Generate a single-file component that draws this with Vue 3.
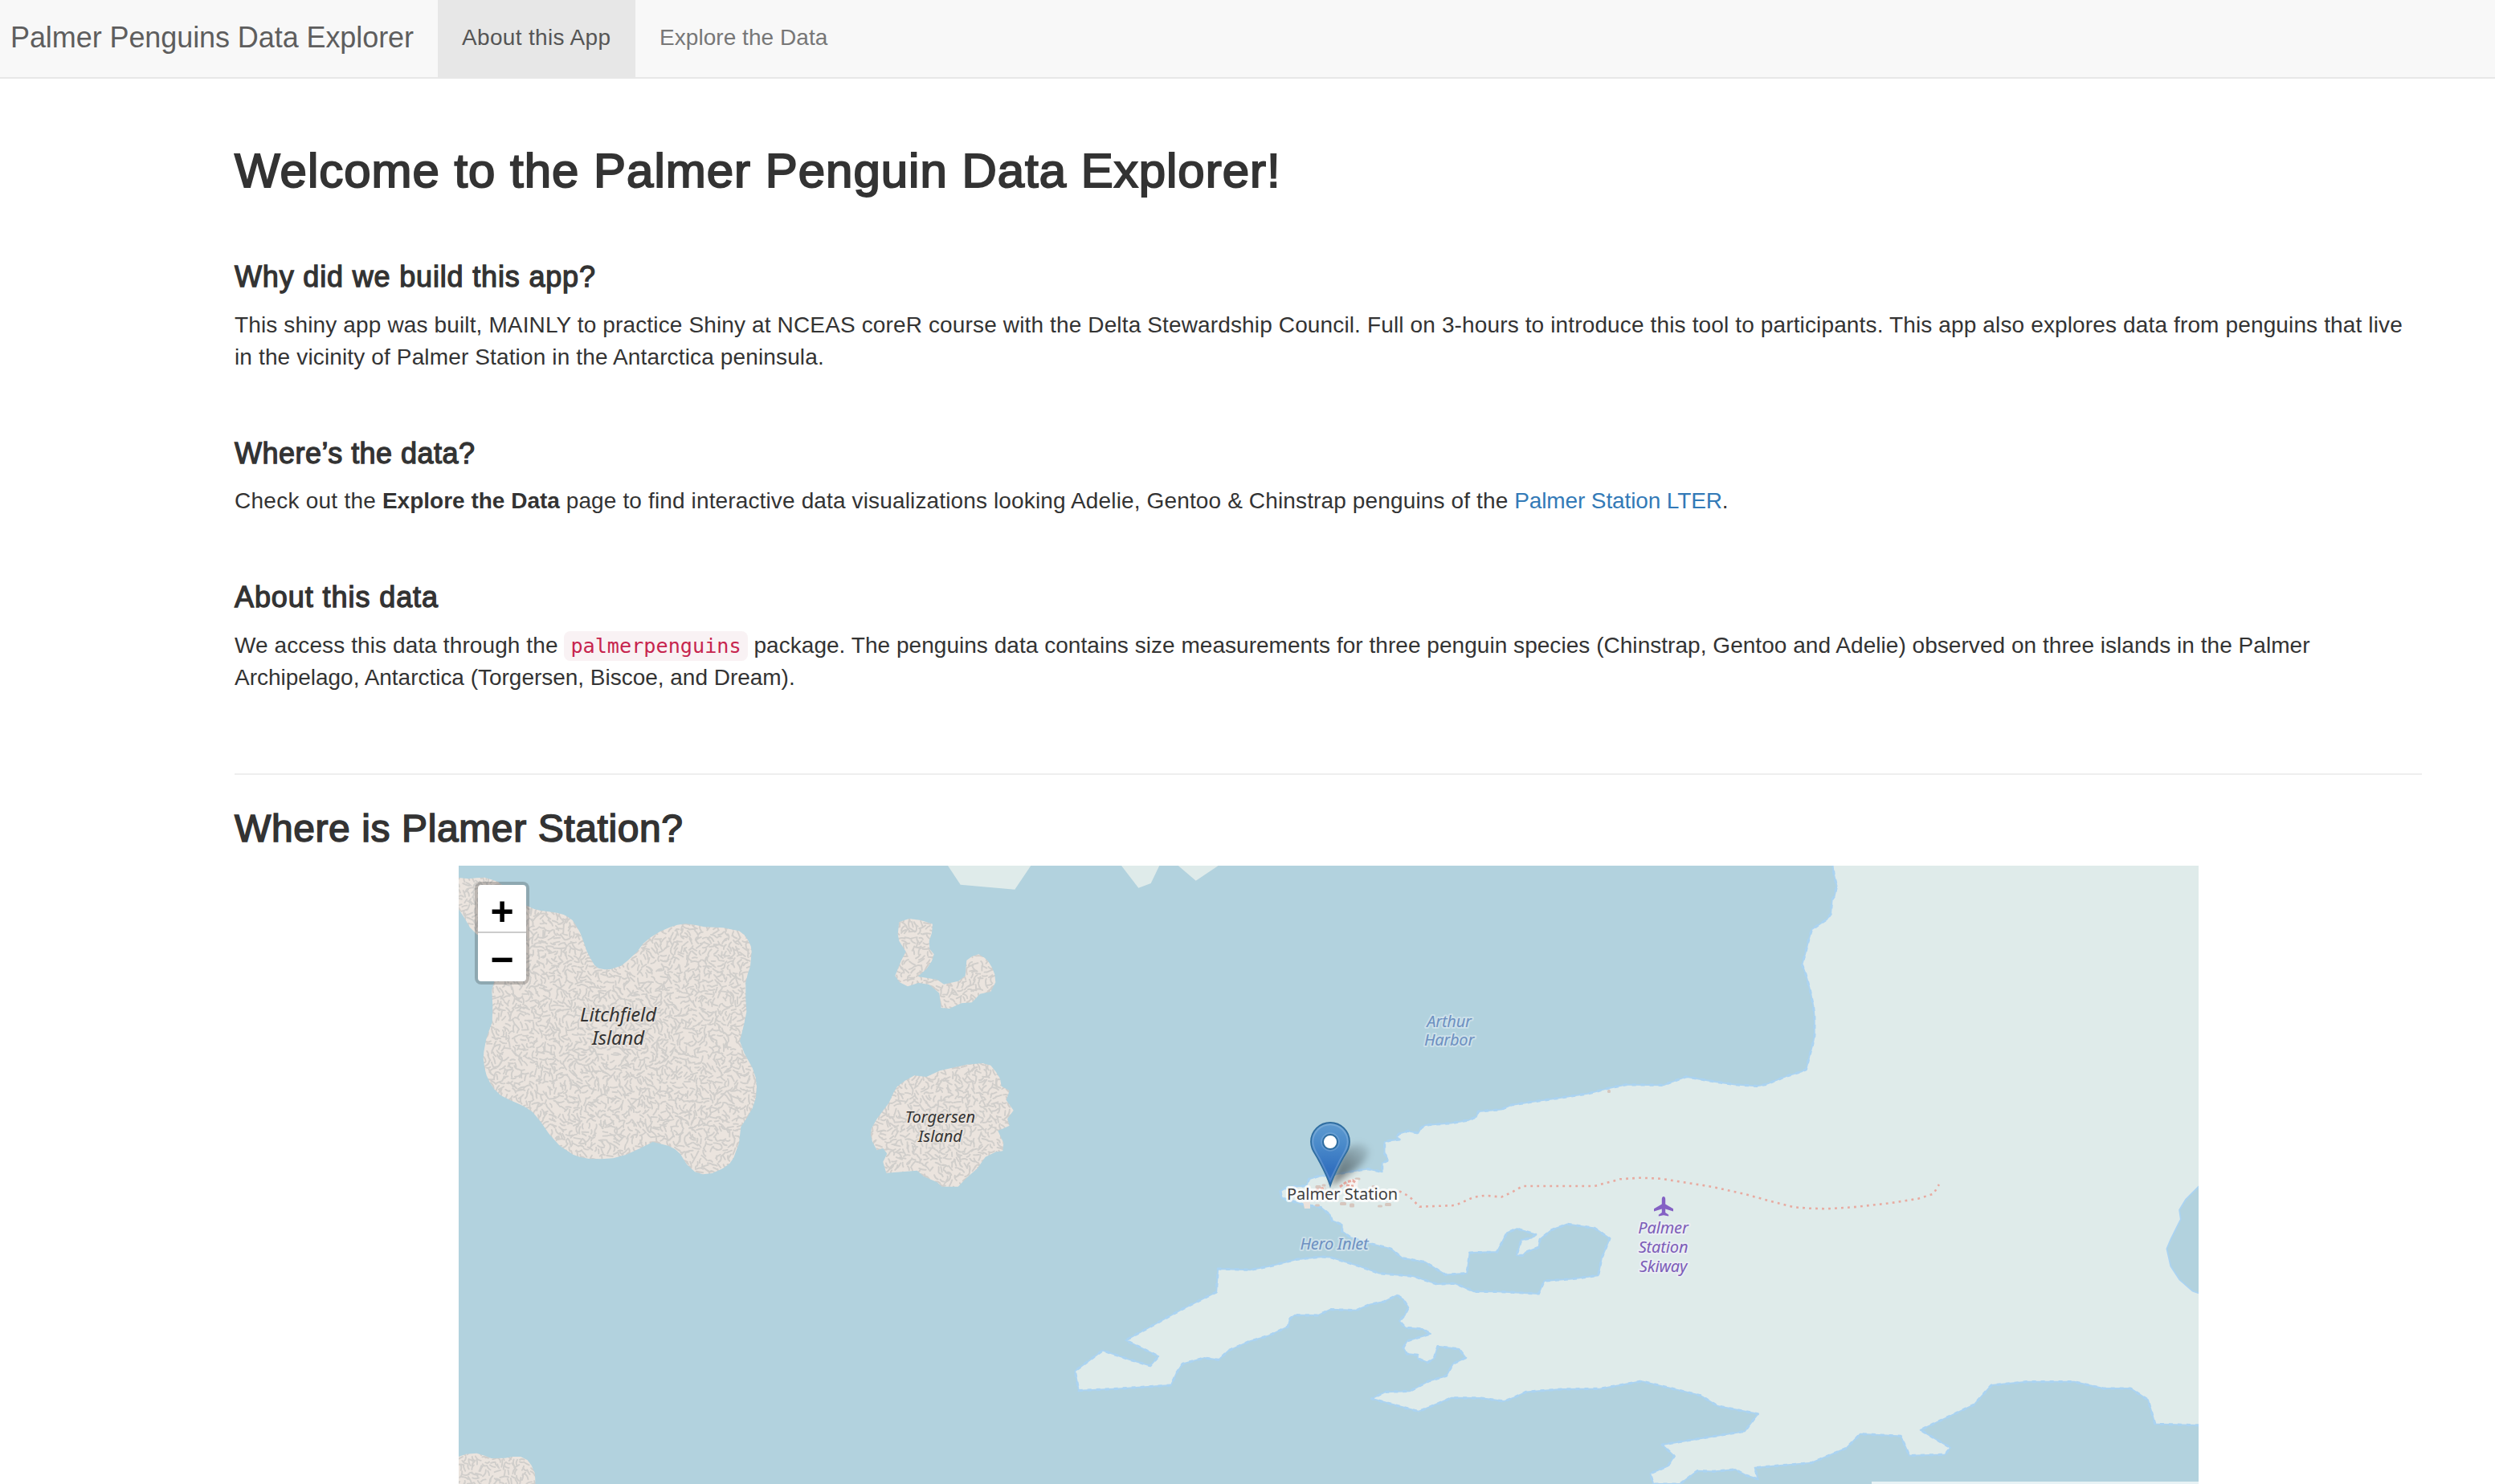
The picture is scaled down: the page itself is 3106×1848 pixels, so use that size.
<script setup>
// Seeded generator, so that the ground texture is the same on every load
let seed = 20117
const rnd = () => {
  seed = (seed * 1664525 + 1013904223) % 4294967296
  return seed / 4294967296
}

// Short curved strokes that make up the bare-rock texture
const TILE = 900
const STEP = 6
const strokes = []
for (let gy = 0; gy < TILE / STEP; gy++) {
  for (let gx = 0; gx < TILE / STEP; gx++) {
    if (rnd() < 0.08) continue
    const x = gx * STEP + (rnd() - 0.5) * 5
    const y = gy * STEP + (rnd() - 0.5) * 5
    const a = Math.sin(gx * 0.55 + gy * 0.13) * 1.5 + Math.cos(gy * 0.6 - gx * 0.17) * 1.7 + rnd() * 1.6
    const l = 2.4 + rnd() * 2
    const b = (rnd() - 0.5) * 5
    const dx = Math.cos(a) * l
    const dy = Math.sin(a) * l
    strokes.push(
      `M${(x - dx).toFixed(1)} ${(y - dy).toFixed(1)}Q${(x - (dy / l) * b).toFixed(1)} ${(y + (dx / l) * b).toFixed(1)} ${(x + dx).toFixed(1)} ${(y + dy).toFixed(1)}`
    )
  }
}
const texture = strokes.join('')

// Turns a survey sheet (origin, scale, "x,y x,y ...") into map coordinates
const sheet = (ox, oy, sx, sy, list) =>
  list.trim().split(/\s+/).map((p) => {
    const [x, y] = p.split(',').map(Number)
    return [ox + x / sx, oy + y / sy]
  })
const line = (pts) => pts.map((p) => `${p[0].toFixed(1)},${p[1].toFixed(1)}`).join(' ')

const coast = [
  ...sheet(2100, 1060, 2.412, 3, '438,40 438,54 442,90 450,130 443,168 436,180 432,235 420,255 375,292 366,330 357,375 346,424 357,460 370,520 380,580 383,620 383,690 378,720 368,765 358,815 345,823 300,840 235,872 210,877 145,872 85,861 0,843'),
  ...sheet(1560, 1340, 2.8, 3, '1508,3 1470,18 1430,34 1300,32 1240,45 1170,65 1060,83 1000,92 900,108 865,125 785,132 778,152 750,165 690,176 600,183 585,195 575,213 540,205 510,215 500,225 510,237 480,240 458,246 458,290 465,300 470,315 450,325 450,358 400,347 350,355 300,365 225,375 195,385 185,410 120,415 95,430 100,455 130,465 175,480 235,490 268,518 275,540 310,555 310,580 340,603 405,625 480,645 520,680 600,695 670,742 745,737 755,660 850,657 885,585 920,570 985,592 970,605 935,612 918,670 940,670 950,658 995,640 1000,610 1040,575 1095,553 1190,568 1243,607 1215,680 1203,745 1110,758 1015,765 995,813 850,805 770,805 705,775 640,777 560,748 440,737 370,710 270,677 240,675 150,685 60,710 0,722'),
  ...sheet(1300, 1480, 2.6133, 3, '670,304 565,300 560,387 450,450 265,567 372,627 345,662 280,640 190,605 100,682 112,755 240,748 412,735 430,690 450,655 520,633 567,640 600,605 665,572 730,550 793,516 800,485 815,473 890,474 930,452 1015,455 1060,433 1105,423 1148,398 1168,415 1185,445 1172,475 1155,495 1175,520 1230,525 1257,543 1180,570 1168,595 1180,618 1215,622 1215,635 1247,650 1268,635 1280,590 1350,600 1371,632 1330,655 1308,700 1250,720 1190,757 1110,760 1065,785 1218,833 1325,782 1420,783 1495,795 1530,780'),
  ...sheet(1900, 1380, 1.8447, 3, '0,1060 80,1050 170,1048 265,1020 400,1073 440,1113 532,1142 502,1207 312,1257 340,1300 325,1337 285,1365 292,1404 353,1404 393,1355 430,1357 480,1350 505,1372 532,1385 525,1343 655,1325 735,1270 767,1217 860,1225 880,1298 962,1294 974,1268 905,1202 1028,1108 1068,1035 1150,1022 1258,1022 1325,1047 1388,1047 1428,1090 1444,1180 1570,1186'),
]
const mainland = line([...coast, [2751, 1060]])
const shore = line(coast)

const lake = line(sheet(1900, 1380, 1.8447, 3, '1580,230 1544,293 1515,340 1500,380 1503,415 1480,490 1471,525 1480,590 1500,640 1530,683 1580,710'))

const islets = [
  '360,54 407,125 610,143 670,54',
  '1008,54 1072,137 1118,120 1150,54',
  '1220,54 1286,110 1370,54',
].map((s) => line(sheet(1060, 1060, 3, 3, s)))

const rocks = [
  sheet(560, 1060, 3, 3, '290,205 315,216 340,222 370,226 400,230 425,237 440,245 458,258 470,275 487,305 500,340 512,375 525,400 540,425 555,437 578,442 600,441 640,428 665,408 700,375 722,345 750,322 785,300 820,285 850,275 880,271 915,275 950,283 1020,286 1080,298 1100,313 1115,335 1124,355 1127,375 1122,430 1112,460 1105,490 1105,550 1108,600 1100,640 1083,710 1100,755 1130,810 1142,845 1146,880 1143,920 1130,960 1110,995 1087,1030 1080,1090 1060,1145 1045,1167 1020,1185 980,1203 945,1207 915,1198 885,1170 860,1130 840,1112 815,1100 758,1086 710,1110 660,1133 610,1147 565,1150 520,1149 485,1142 460,1133 410,1100 370,1055 340,1012 310,975 285,958 260,945 225,930 190,912 165,888 150,865 137,838 130,810 125,775 127,750 135,705 147,668 158,640 160,580 157,520 165,490 180,420 130,330 100,310 75,285 55,250 35,220 20,200 20,98 70,103 100,100 130,98 160,107 180,115 200,130 240,180'),
  sheet(1060, 1060, 3, 3, '178,265 215,252 260,258 303,272 300,305 290,335 292,365 308,385 300,410 280,440 248,468 320,480 345,497 400,485 425,465 430,408 450,393 475,385 495,397 510,410 525,435 535,460 538,490 520,525 480,533 450,565 410,568 365,588 335,585 328,530 290,498 250,492 210,505 180,490 163,465 185,410 203,375 178,335 173,310'),
  sheet(1060, 1060, 3, 3, '75,1035 95,1000 140,940 158,900 170,880 200,857 235,838 280,843 330,820 430,797 490,792 520,800 540,825 555,850 560,878 590,895 578,930 605,968 582,1000 590,1025 547,1045 568,1090 565,1120 540,1123 500,1142 470,1185 430,1220 398,1253 338,1253 320,1237 270,1215 245,1193 130,1202 118,1160 133,1130 118,1110 95,1117 78,1085 72,1060'),
  sheet(560, 1740, 3, 3, '20,224 33,222 60,212 100,209 130,218 155,228 205,227 235,222 265,222 290,235 305,255 318,285 320,340 20,340'),
].map(line)

const trail = line([
  ...sheet(1560, 1340, 2.8, 3, '510,430 545,450 580,488 610,487 705,483 770,452 810,446 865,452 900,435 940,411 1190,411 1280,385 1350,380 1420,383 1568,408'),
  ...sheet(1900, 1380, 1.8447, 3, '430,295 500,320 560,347 615,370 650,374 690,376 750,370 835,355 900,338 935,320 948,285'),
])

const buildings = [
  [1641, 1478, 7, 4], [1648, 1476, 5, 3], [1690, 1468, 7, 3], [1710, 1478, 5, 4],
  [1640, 1501, 6, 3], [1672, 1499, 8, 4], [1683, 1501, 6, 5], [1718, 1502, 6, 3],
  [1728, 1500, 8, 4], [2003, 1359, 4, 4],
]

const labels = [
  { lines: ['Litchfield', 'Island'], x: 769.5, y: [1272, 1300.7], kind: 'island large' },
  { lines: ['Torgersen', 'Island'], x: 1170.5, y: [1398.3, 1422], kind: 'island' },
  { lines: ['Arthur', 'Harbor'], x: 1804, y: [1278.5, 1302.2], kind: 'sea' },
  { lines: ['Hero Inlet'], x: 1661, y: [1556], kind: 'sea' },
  { lines: ['Palmer', 'Station', 'Skiway'], x: 2070.5, y: [1536, 1560, 1584], kind: 'air' },
  { lines: ['Palmer Station'], x: 1671, y: [1494.4], kind: 'place' },
]
</script>

<template>
  <div class="page">
    <nav class="navbar">
      <a class="brand">Palmer Penguins Data Explorer</a>
      <a class="tab active">About this App</a>
      <a class="tab explore">Explore the Data</a>
    </nav>

    <main class="content">
      <h1>Welcome to the Palmer Penguin Data Explorer!</h1>

      <section class="why">
        <h4 class="h-why">Why did we build this app?</h4>
        <p>
          <span class="l1">This shiny app was built, MAINLY to practice Shiny at NCEAS coreR course with the Delta Stewardship Council. Full on 3-hours to introduce this tool to participants. This app also explores data from penguins that live</span><br />
          <span class="l1">in the vicinity of Palmer Station in the Antarctica peninsula.</span>
        </p>
      </section>

      <section class="where">
        <h4 class="h-where">Where’s the data?</h4>
        <p><span class="l2">Check out the</span> <strong>Explore the Data</strong> <span class="l1">page to find interactive data visualizations looking Adelie, Gentoo &amp; Chinstrap penguins of the</span> <a class="link">Palmer Station LTER</a>.</p>
      </section>

      <section class="about">
        <h4 class="h-about">About this data</h4>
        <p>
          <span class="l3">We access this data through the</span> <code>palmerpenguins</code> <span class="l4">package. The penguins data contains size measurements for three penguin species (Chinstrap, Gentoo and Adelie) observed on three islands in the Palmer</span><br />
          <span class="l5">Archipelago, Antarctica (Torgersen, Biscoe, and Dream).</span>
        </p>
      </section>

      <hr />
      <h3>Where is Plamer Station?</h3>

      <div class="map">
        <svg class="tiles" viewBox="571 1078 2166 770" width="2166" height="770">
          <defs>
            <pattern id="rock" x="500" y="1000" :width="TILE" :height="TILE" patternUnits="userSpaceOnUse">
              <rect :width="TILE" :height="TILE" fill="#ebe4de" />
              <path :d="texture" fill="none" stroke="#d0cecb" stroke-width="1.9" stroke-linecap="round" />
            </pattern>
            <linearGradient id="pin" x1="0" y1="0" x2="0" y2="1">
              <stop offset="0" stop-color="#5f9bd0" />
              <stop offset="0.35" stop-color="#4a8aca" />
              <stop offset="0.75" stop-color="#3270bf" />
              <stop offset="1" stop-color="#2e6dc0" />
            </linearGradient>
            <linearGradient id="shade" x1="1656" y1="1478" x2="1700" y2="1420" gradientUnits="userSpaceOnUse">
              <stop offset="0" stop-color="#000" stop-opacity="0.55" />
              <stop offset="0.5" stop-color="#000" stop-opacity="0.34" />
              <stop offset="1" stop-color="#000" stop-opacity="0.04" />
            </linearGradient>
            <filter id="soft" x="-50%" y="-50%" width="200%" height="200%">
              <feGaussianBlur stdDeviation="4" />
            </filter>
          </defs>

          <rect x="571" y="1078" width="2166" height="770" fill="#b2d2de" />
          <polygon :points="mainland" fill="#dfebea" />
          <polyline :points="shore" class="shore" />
          <polyline :points="shore" class="shore beads" />
          <polygon :points="lake" fill="#b2d2de" />
          <polyline :points="lake" class="shore" />
          <polygon v-for="p in islets" :key="p" :points="p" fill="#dfebea" />
          <polygon v-for="p in rocks" :key="p" :points="p" fill="url(#rock)" />

          <polyline :points="trail" class="trail" />
          <path d="M1622 1496h9v9h-7z" fill="#ebe2dc" />
          <rect v-for="b in buildings" :key="b[0]" :x="b[0] - b[2] / 2" :y="b[1] - b[3] / 2" :width="b[2]" :height="b[3]" rx="1.5" fill="#d6c6be" />
          <path d="M1680 1468l11 1-1 9-14 3z" fill="#f6f3f1" />
          <path d="M1638 1482l12-3 M1668 1478l8-6 8-2 4 3 M1676 1476l9 1" class="trail lanes" />

          <text v-for="l in labels" :key="l.kind + l.lines[0]" text-anchor="middle" :class="l.kind">
            <tspan v-for="(t, i) in l.lines" :key="t" :x="l.x" :y="l.y[i]">{{ t }}</tspan>
          </text>

          <path
            d="M2071 1490c1.300 0 2.200 1.600 2.200 3.200v6.300l9.800 5.800v3.300l-9.800-3v4.500l4 2.600v1.800l-6.200-1.200-6.200 1.200v-1.800l4-2.600v-4.500l-9.800 3v-3.300l9.800-5.800v-6.300c0-1.600.9-3.200 2.200-3.200z"
            fill="#8461c4"
          />

          <path d="M1656 1478L1669 1440C1676 1424 1698 1420 1703 1430C1707 1440 1694 1452 1682 1460Z" fill="url(#shade)" filter="url(#soft)" />
          <path
            d="M1656 1476.500C1652 1464 1647 1455 1641.500 1444.500C1636.500 1435 1632 1431 1632 1421.800A24 23.800 0 0 1 1680 1421.800C1680 1431 1675.500 1435 1670.500 1444.500C1665 1455 1660 1464 1656 1476.500Z"
            fill="url(#pin)" stroke="#2f6da0" stroke-width="1.800"
          />
          <path
            d="M1656 1470C1652 1461 1648 1453 1643.500 1444C1638.500 1435 1634.300 1430 1634.300 1421.800A21.700 21.500 0 0 1 1677.700 1421.800C1677.700 1430 1673.500 1435 1668.500 1444C1664 1453 1660 1461 1656 1470Z"
            fill="none" stroke="#fff" stroke-opacity="0.16" stroke-width="2"
          />
          <circle cx="1656" cy="1422" r="11" fill="none" stroke="#fff" stroke-opacity="0.14" stroke-width="1.600" />
          <circle cx="1656" cy="1422" r="9" fill="#fff" stroke="#2f6da0" stroke-width="2" />
        </svg>

        <div class="zoom">
          <a class="zoom-btn">+</a>
          <a class="zoom-btn">−</a>
        </div>
        <div class="attribution"></div>
      </div>
    </main>
  </div>
</template>

<style>
body {
  margin: 0;
  background: #fff;
  overflow: hidden;
}
</style>

<style scoped>
.page {
  width: 3106px;
  height: 1848px;
  overflow: hidden;
  background: #fff;
  color: #333;
  font: 28px/40px "Liberation Sans", Arial, sans-serif;
  white-space: nowrap;
}
.navbar {
  display: flex;
  box-sizing: border-box;
  height: 98px;
  background: #f8f8f8;
  border-bottom: 2px solid #e7e7e7;
}
.brand {
  box-sizing: border-box;
  width: 545px;
  padding: 27px 0 0 13px;
  font-size: 36px;
  letter-spacing: -0.08px;
  color: #5e5e5e;
}
.tab {
  box-sizing: border-box;
  height: 96px;
  padding: 27px 30px 0;
  color: #777;
}
.tab.active {
  width: 246px;
  padding-right: 0;
  background: #e7e7e7;
  color: #555;
  letter-spacing: 0.34px;
}
.explore { letter-spacing: 0.05px; }

.content {
  padding: 82px 91px 0 292px;
}
h1, h3, h4, p, hr { margin: 0; }
h1, h3, h4 {
  font-weight: 400;
  -webkit-text-stroke: 1px #333;
}
h1 {
  font-size: 60px;
  line-height: 66px;
  letter-spacing: 0.98px;
  -webkit-text-stroke-width: 2px;
}
h4 {
  font-size: 36px;
  line-height: 40px;
  margin-bottom: 20px;
  -webkit-text-stroke-width: 1.3px;
}
h3 {
  font-size: 48px;
  line-height: 52px;
  letter-spacing: 0.6px;
  -webkit-text-stroke-width: 1.6px;
}
.h-why { letter-spacing: 0.83px; }
.h-where {
  margin-bottom: 19px;
  letter-spacing: 0.47px;
}
.h-about { letter-spacing: 0.92px; }
.why { margin-top: 79px; }
.where { margin-top: 80px; }
.about { margin-top: 80px; }
.l1 { letter-spacing: 0.138px; }
.l2 { letter-spacing: 0.26px; }
.l3 { letter-spacing: 0.1px; }
.l4 { letter-spacing: 0.04px; }
.l5 { letter-spacing: -0.02px; }
.link {
  color: #337ab7;
  letter-spacing: -0.12px;
}
code {
  padding: 4px 8px;
  border-radius: 8px;
  background: #f9f2f4;
  color: #c7254e;
  font: 25.2px "DejaVu Sans Mono", monospace;
}
hr {
  height: 2px;
  margin-top: 99px;
  border: 0;
  background: #eee;
}
h3 { margin-top: 41px; }

.map {
  position: relative;
  width: 2166px;
  height: 770px;
  margin: 20px auto 0;
}
.tiles { display: block; }
.shore {
  fill: none;
  stroke: #abd3f1;
  stroke-width: 1.8;
  stroke-linejoin: round;
}
.beads {
  stroke-width: 3.2;
  stroke-dasharray: 5 6;
}
.trail {
  fill: none;
  stroke: #e8aaa0;
  stroke-width: 2.6;
  stroke-dasharray: 2.8 5.2;
}
.lanes {
  stroke-width: 3;
  stroke-dasharray: 4 2;
}
text {
  font: italic 20px "Noto Sans", sans-serif;
  paint-order: stroke;
  stroke-linejoin: round;
  stroke-width: 4px;
}
.island {
  fill: #333;
  stroke: rgba(235, 228, 222, 0.6);
}
.large { font-size: 24px; letter-spacing: -0.15px; }
.sea {
  fill: #6d90c1;
  stroke: rgba(225, 236, 243, 0.55);
  letter-spacing: -0.25px;
}
.air {
  fill: #7c5cb8;
  stroke: rgba(240, 240, 248, 0.7);
  letter-spacing: -0.15px;
}
.place {
  font-style: normal;
  fill: #404040;
  stroke: rgba(255, 255, 255, 0.8);
  stroke-width: 6px;
}
.zoom {
  position: absolute;
  left: 20px;
  top: 20px;
  width: 60px;
  border: 4px solid rgba(0, 0, 0, 0.2);
  border-radius: 8px;
  background: #fff;
  background-clip: padding-box;
  overflow: hidden;
}
.zoom-btn {
  display: block;
  height: 60px;
  padding-left: 1px;
  color: #000;
  text-align: center;
  font: bold 50px/67px "Liberation Sans", Arial, sans-serif;
}
.zoom-btn:first-child {
  height: 58px;
  border-bottom: 2px solid #ccc;
}
.attribution {
  position: absolute;
  right: 0;
  bottom: 0;
  width: 407px;
  height: 3px;
  background: rgba(255, 255, 255, 0.7);
}
</style>
